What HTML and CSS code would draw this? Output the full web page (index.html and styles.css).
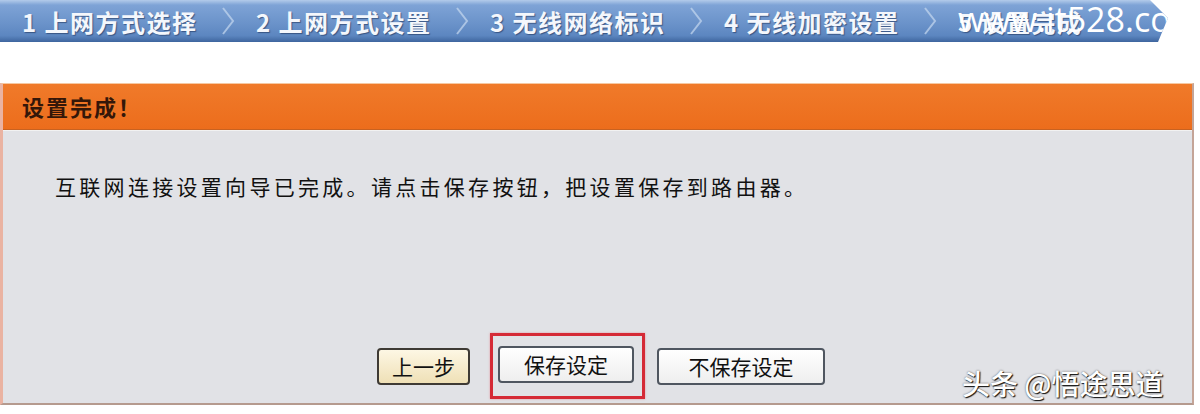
FILE: index.html
```html
<!DOCTYPE html>
<html lang="zh-CN">
<head>
  <meta charset="UTF-8" />
  <meta name="viewport" content="width=device-width, initial-scale=1.0"/>
  <title>设置完成</title>
  <link rel="stylesheet" href="styles.css">
</head>
<body>

  <!-- Wizard steps -->
  <div class="steps">
    <div class="step"><span class="step-label">1 上网方式选择</span><svg class="chev" width="16" height="30" viewBox="0 0 16 30"><path d="M3 2 L13 15 L3 28" /></svg></div>
    <div class="step"><span class="step-label">2 上网方式设置</span><svg class="chev" width="16" height="30" viewBox="0 0 16 30"><path d="M3 2 L13 15 L3 28" /></svg></div>
    <div class="step"><span class="step-label">3 无线网络标识</span><svg class="chev" width="16" height="30" viewBox="0 0 16 30"><path d="M3 2 L13 15 L3 28" /></svg></div>
    <div class="step"><span class="step-label">4 无线加密设置</span><svg class="chev" width="16" height="30" viewBox="0 0 16 30"><path d="M3 2 L13 15 L3 28" /></svg></div>
    <div class="step"><span class="step-label">5 设置完成</span></div>
    <div class="site-mark">www.it528.co</div>
  </div>

  <!-- Result panel -->
  <div class="panel">
    <div class="panel-head">设置完成！</div>
    <div class="panel-body">
      <p class="message">互联网连接设置向导已完成。请点击保存按钮，把设置保存到路由器。</p>
      <div class="actions">
        <button class="btn btn-prev">上一步</button>
        <span class="highlight"><button class="btn btn-save">保存设定</button></span>
        <button class="btn btn-nosave">不保存设定</button>
      </div>
    </div>
  </div>

  <div class="author-mark">头条 @悟途思道</div>

</body>
</html>
```

FILE: styles.css
```css
body {
  margin: 0;
  background: #fff;
  font-family: "Noto Sans CJK SC", "Noto Sans", sans-serif;
  position: relative;
  height: 414px;
  overflow: hidden;
}

/* wizard bar */
.steps {
  position: relative;
  display: flex;
  align-items: center;
  width: 1168px;
  height: 42px;
  padding-left: 22px;
  box-sizing: border-box;
  background: linear-gradient(#b3cbea 0, #7ea3d6 12%, #6b93ca 55%, #5c86c0 85%, #3e659e 100%);
  clip-path: polygon(0 0, 1150px 0, 1168px 18px, 1158px 42px, 0 42px);
}

.step {
  width: 234px;
  flex: none;
  display: flex;
  align-items: center;
}

.step-label {
  color: #f4f7fc;
  font-size: 24px;
  font-weight: bold;
  letter-spacing: 1.5px;
  white-space: nowrap;
  text-shadow: 1px 1px 1px rgba(30, 50, 90, 0.6);
}

.chev {
  margin-left: auto;
  margin-right: 20px;
}

.chev path {
  fill: none;
  stroke: #c6d8f0;
  stroke-width: 2;
  opacity: 0.7;
}

.site-mark {
  position: absolute;
  left: 958px;
  top: -4px;
  font-family: "Open Sans", sans-serif;
  font-size: 34px;
  color: #fff;
  white-space: nowrap;
}

/* panel */
.panel {
  margin-top: 41px;
  width: 1194px;
  border-top: 1px solid #f6c8a2;
  border-left: 3px solid #eab3a2;
  border-right: 2px solid #c4a497;
  border-bottom: 2px solid #b59a8e;
  box-sizing: border-box;
}

.panel-head {
  height: 45px;
  background: linear-gradient(#f07a2a, #ec6d1c);
  border-bottom: 1px solid #c86221;
  color: #341709;
  font-size: 22px;
  font-weight: bold;
  letter-spacing: 2px;
  line-height: 45px;
  padding-left: 19px;
}

.panel-body {
  background: #e1e2e6;
  border-top: 1px solid #f2f2f2;
  height: 273px;
  box-sizing: border-box;
  padding-top: 39px;
}

.message {
  margin: 0 0 0 52px;
  font-size: 21px;
  letter-spacing: 3.3px;
  color: #111;
  line-height: 32px;
}

.actions {
  display: flex;
  align-items: center;
  margin-top: 131px;
  padding-left: 374px;
}

.btn {
  height: 37px;
  font-family: "Noto Sans CJK SC", sans-serif;
  font-size: 21px;
  color: #111;
  border: 2px solid #4f5660;
  border-radius: 4px;
  background: linear-gradient(#ffffff, #eeeeee);
  padding: 0;
  line-height: 31px;
}

.btn-prev {
  width: 93px;
  background: linear-gradient(#fdf7e4, #efe0b6);
  border-color: #3e3a34;
  margin-right: 20px;
}

.btn-save {
  width: 136px;
}

.btn-nosave {
  width: 168px;
  margin-left: 12px;
}

.highlight {
  display: flex;
  padding: 10px 8px 13px 5px;
  border: 3px solid #d52a36;
  box-shadow: 0 0 2px rgba(230, 80, 90, 0.5);
}

.author-mark {
  position: absolute;
  left: 962px;
  top: 363px;
  font-size: 28px;
  font-weight: 500;
  color: #fff;
  white-space: nowrap;
  text-shadow: 1px 1px 1px #111, 0 0 2px rgba(0, 0, 0, 0.6);
}
```
